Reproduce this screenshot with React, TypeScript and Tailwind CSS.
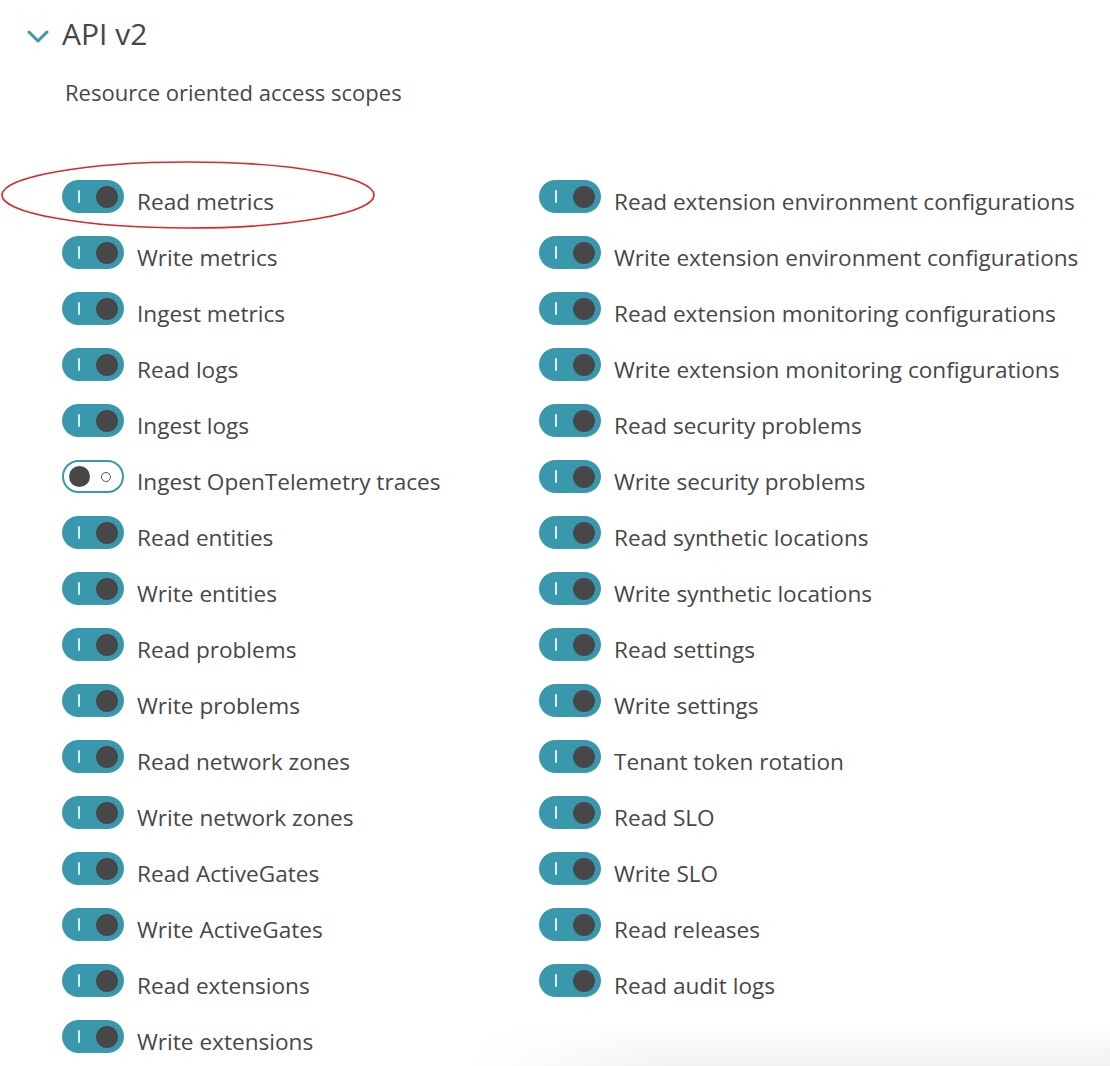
const left = [
  { label: "Read metrics", on: true },
  { label: "Write metrics", on: true },
  { label: "Ingest metrics", on: true },
  { label: "Read logs", on: true },
  { label: "Ingest logs", on: true },
  { label: "Ingest OpenTelemetry traces", on: false },
  { label: "Read entities", on: true },
  { label: "Write entities", on: true },
  { label: "Read problems", on: true },
  { label: "Write problems", on: true },
  { label: "Read network zones", on: true },
  { label: "Write network zones", on: true },
  { label: "Read ActiveGates", on: true },
  { label: "Write ActiveGates", on: true },
  { label: "Read extensions", on: true },
  { label: "Write extensions", on: true },
];

const right = [
  "Read extension environment configurations",
  "Write extension environment configurations",
  "Read extension monitoring configurations",
  "Write extension monitoring configurations",
  "Read security problems",
  "Write security problems",
  "Read synthetic locations",
  "Write synthetic locations",
  "Read settings",
  "Write settings",
  "Tenant token rotation",
  "Read SLO",
  "Write SLO",
  "Read releases",
  "Read audit logs",
].map((label) => ({ label, on: true }));

function Toggle({ on }: { on: boolean }) {
  if (on) {
    return (
      <span className="flex h-[33px] w-[62px] shrink-0 items-center justify-between rounded-full bg-[#3a98ad] pl-[16px] pr-[6px]">
        <span className="h-[13px] w-[2px] rounded-sm bg-[#d8eef3]" />
        <span className="h-[22px] w-[22px] rounded-full bg-[#474747]" />
      </span>
    );
  }
  return (
    <span className="flex h-[33px] w-[62px] shrink-0 items-center justify-between rounded-full border-2 border-[#3a98ad] bg-white pl-[5px] pr-[11px]">
      <span className="h-[21px] w-[21px] rounded-full bg-[#474747]" />
      <span className="h-[10px] w-[10px] rounded-full border-[1.5px] border-[#555]" />
    </span>
  );
}

function Row({ label, on, circled }: { label: string; on: boolean; circled?: boolean }) {
  return (
    <div className="relative flex h-[56px] items-start">
      <Toggle on={on} />
      <span className="ml-[13px] text-[22.6px] leading-[44px] text-[#474747]">{label}</span>
      {circled && (
        <svg
          className="pointer-events-none absolute left-[-62px] top-[-21px]"
          width="378"
          height="72"
          viewBox="0 0 378 72"
        >
          <ellipse cx="188" cy="36" rx="186" ry="33" fill="none" stroke="#d7282b" strokeWidth="1.6" />
        </svg>
      )}
    </div>
  );
}

export default function App() {
  return (
    <div
      className="relative h-[1066px] w-[1110px] overflow-hidden bg-white"
      style={{ fontFamily: '"Open Sans", "Liberation Sans", sans-serif' }}
    >
      <div className="flex items-center pl-[27px] pt-[14px]">
        <svg width="22" height="14" viewBox="0 0 22 14" className="mt-[4px]">
          <path d="M2 3 L11 12 L20 3" fill="none" stroke="#3a98ad" strokeWidth="3" strokeLinecap="round" strokeLinejoin="round" />
        </svg>
        <h2 className="ml-[13px] text-[30px] leading-[40px] text-[#454646]">API v2</h2>
      </div>
      <p className="ml-[65px] mt-[23px] text-[22px] leading-[30px] text-[#474747]">
        Resource oriented access scopes
      </p>
      <div className="mt-[73px] grid grid-cols-[477px_1fr] pl-[62px]">
        <div className="flex flex-col">
          {left.map((r, i) => (
            <Row key={r.label} label={r.label} on={r.on} circled={i === 0} />
          ))}
        </div>
        <div className="flex flex-col">
          {right.map((r) => (
            <Row key={r.label} label={r.label} on={r.on} />
          ))}
        </div>
      </div>
      <div className="pointer-events-none absolute bottom-0 right-0 h-[44px] w-[640px] bg-[linear-gradient(to_bottom,#ffffff,#f1f1f1)] [mask-image:linear-gradient(to_right,transparent,black_220px)]" />
    </div>
  );
}
